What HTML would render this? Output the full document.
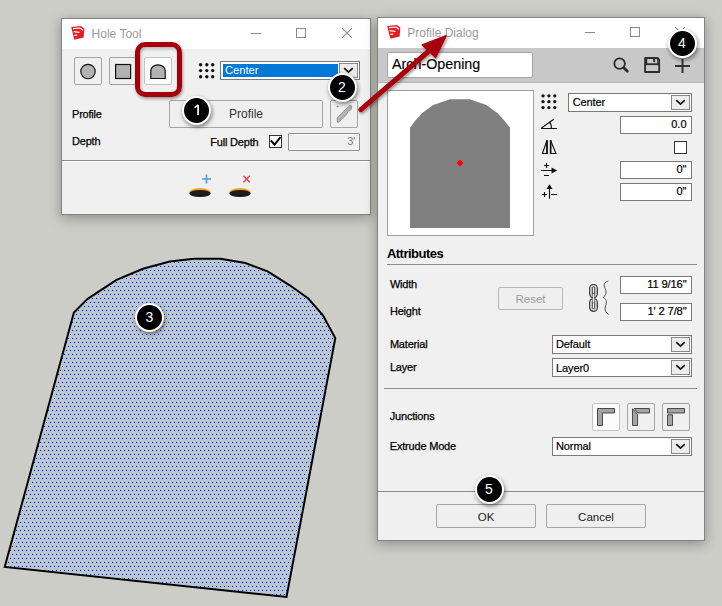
<!DOCTYPE html>
<html><head><meta charset="utf-8">
<style>
*{box-sizing:border-box;margin:0;padding:0}
html,body{width:722px;height:606px;overflow:hidden;background:#cdcdc8;font-family:"Liberation Sans",sans-serif;font-size:12px;color:#000}
.a{position:absolute}
.win{position:absolute;background:#f0f0f0;border:1px solid #828282;box-shadow:0 3px 12px rgba(0,0,0,0.32)}
.tb{position:absolute;left:0;top:0;right:0;height:30px;background:#fff}
.ttl{position:absolute;top:8px;font-size:12px;color:#999;white-space:nowrap}
.fld{position:absolute;background:#fff;border:1px solid #7a7a7a}
.txt{position:absolute;white-space:nowrap;line-height:14px}
.btn{position:absolute;border:1px solid #a5a5a5;background:#e9e9e9;border-radius:2px}
.badge{position:absolute;width:29px;height:29px;border-radius:50%;background:#000;border:2px solid #fff;box-shadow:1px 2px 4px rgba(0,0,0,0.5);color:#fff;font-size:14px;text-align:center;line-height:25px}
</style></head>
<body>

<!-- viewport shape -->
<svg class="a" style="left:0;top:0" width="722" height="606">
  <defs>
    <pattern id="dots" width="4" height="8" patternUnits="userSpaceOnUse">
      <rect width="4" height="8" fill="#b9c7d2"/>
      <rect x="0" y="2" width="1" height="1" fill="#0000ff"/>
      <rect x="2" y="6" width="1" height="1" fill="#0000ff"/>
    </pattern>
  </defs>
  <path d="M4.7,567 L73.9,312.5 L87.7,298.8 L116.5,279.9 L143,268.8 L169.7,261.5 L194,258.8 L220.5,258.8 L245.4,263 L267.6,271.3 L289.8,285.3 L308.3,298.5 L322.8,315 L335.3,338.1 L286.5,597 Z" fill="url(#dots)" stroke="#000" stroke-width="2" stroke-linejoin="miter"/>
</svg>
<div class="badge" style="left:135px;top:302.5px">3</div>

<!-- Hole Tool window -->
<div class="win" style="left:61px;top:18px;width:310px;height:197px">
  <div class="tb"></div>
  <svg class="a" style="left:9px;top:6px" width="15" height="15" viewBox="0 0 15 15"><path d="M0.2,2 L9.9,1.1 L13.4,3.8 L12.6,12.4 L3.3,14.7 Z" fill="#e31e24"/><path d="M2,3.6 L9,3 L12,5.2" stroke="#fff" stroke-width="1.2" fill="none"/><path d="M2.6,6.6 L8.4,7.3" stroke="#fff" stroke-width="1.2"/><path d="M3.4,10.4 L6.2,10.1" stroke="#fff" stroke-width="1.2"/></svg>
  <div class="txt ttl" style="left:29.6px;top:9px;font-size:12px;line-height:12px;color:#9a9a9a">Hole Tool</div>
  <div class="a" style="left:189px;top:14px;width:10px;height:1px;background:#8a8a8a"></div>
  <div class="a" style="left:234px;top:9px;width:10px;height:10px;border:1px solid #8a8a8a"></div>
  <svg class="a" style="left:280px;top:9px" width="10" height="10"><path d="M0,0 L10,10 M10,0 L0,10" stroke="#8a8a8a" stroke-width="1.1"/></svg>

  <!-- shape buttons -->
  <div class="btn" style="left:12px;top:38px;width:28px;height:28px;background:#f0f0f0;border-color:#a5a5a5"></div>
  <div class="btn" style="left:47px;top:38px;width:28px;height:28px;background:#f0f0f0;border-color:#a5a5a5"></div>
  <div class="btn" style="left:82px;top:38px;width:28px;height:28px;background:#fbfbfb;border-color:#c4c4c4"></div>
  <svg class="a" style="left:0;top:0" width="310" height="100">
    <circle cx="26" cy="52.5" r="7.2" fill="#b2b2b2" stroke="#111" stroke-width="1.15"/>
    <rect x="53.6" y="45.5" width="15" height="14" fill="#b2b2b2" stroke="#111" stroke-width="1.2"/>
    <path d="M88.8,59.5 L88.8,51.8 A7.2,6 0 0 1 103.2,51.8 L103.2,59.5 Z" fill="#b2b2b2" stroke="#111" stroke-width="1.2"/>
    <g fill="#111">
      <circle cx="138.6" cy="45.8" r="1.7"/><circle cx="144.8" cy="45.8" r="1.7"/><circle cx="150.7" cy="45.8" r="1.7"/>
      <circle cx="138.6" cy="51.6" r="1.7"/><circle cx="144.8" cy="51.6" r="1.7"/><circle cx="150.7" cy="51.6" r="1.7"/>
      <circle cx="138.6" cy="57.8" r="1.7"/><circle cx="144.8" cy="57.8" r="1.7"/><circle cx="150.7" cy="57.8" r="1.7"/>
    </g>
  </svg>
  <!-- dropdown -->
  <div class="fld" style="left:158px;top:42px;width:140px;height:19px;border-color:#7a7a7a"></div>
  <div class="a" style="left:161px;top:45px;width:115px;height:13px;background:#0078d7"></div>
  <div class="txt" style="left:162.9px;top:45.6px;font-size:11.2px;line-height:11px;color:#fff">Center</div>
  <div class="a" style="left:277px;top:44px;width:19px;height:15px;border:1px solid #8a8a8a;background:#ededed"></div>
  <svg class="a" style="left:281px;top:48px" width="11" height="7"><path d="M1.2,1.2 L5.5,5.2 L9.8,1.2" stroke="#111" stroke-width="1.7" fill="none"/></svg>

  <!-- Profile row -->
  <div class="txt" style="left:10px;top:89.6px;font-size:11px;line-height:11px;letter-spacing:-0.2px;-webkit-text-stroke:0.25px #000">Profile</div>
  <div class="btn" style="left:107px;top:81px;width:154px;height:28px;background:#efefef;border-color:#a5a5a5"></div>
  <div class="txt" style="left:107px;top:89.1px;width:154px;text-align:center;font-size:12px;line-height:12px;color:#333">Profile</div>
  <div class="btn" style="left:268px;top:81px;width:28px;height:28px;background:#efefef;border-color:#a5a5a5"></div>
  <svg class="a" style="left:268px;top:81px" width="28" height="28"><path d="M7.2,17.8 L19.4,5.4 L21.8,6 L21.2,9.4 L17.8,11.7 L16.7,14.4 L12.3,19.1 L8.3,22.5 L7.2,22 Z" fill="#b2b2b2" stroke="#8a8a8a" stroke-width="0.8" stroke-linejoin="round"/><rect x="6.9" y="5.8" width="1.5" height="1.3" fill="#f33"/></svg>

  <!-- Depth row -->
  <div class="txt" style="left:10px;top:117px;font-size:11px;line-height:11px;letter-spacing:-0.2px;-webkit-text-stroke:0.25px #000">Depth</div>
  <div class="txt" style="left:148.3px;top:117.5px;font-size:11px;line-height:11px;letter-spacing:-0.2px;-webkit-text-stroke:0.25px #000">Full Depth</div>
  <div class="a" style="left:207px;top:116px;width:13px;height:13px;border:1px solid #333;background:#fff"></div>
  <svg class="a" style="left:207px;top:116px" width="13" height="13"><path d="M1.8,5.4 L5.6,9.6 L11.6,2" stroke="#000" stroke-width="2" fill="none"/></svg>
  <div class="a" style="left:226px;top:114px;width:72px;height:18px;border:1px solid #8f8f8f;border-radius:1px;background:#f0f0f0;box-shadow:inset 0 0 0 1px #fafafa"></div>
  <div class="txt" style="left:226px;top:117.3px;width:67.4px;text-align:right;font-size:11px;line-height:11px;color:#7a7a7a">3'</div>

  <!-- separator -->
  <div class="a" style="left:0;top:141px;width:308px;height:1px;background:#8c8c8c"></div>
  <div class="a" style="left:0;top:142px;width:308px;height:1px;background:#fff"></div>

  <!-- hole icons -->
  <svg class="a" style="left:120px;top:150px" width="100" height="40">
    <ellipse cx="18" cy="23.6" rx="11" ry="4.3" fill="#f29a1a"/>
    <ellipse cx="18" cy="24.5" rx="10.6" ry="3.6" fill="#1c1c1c"/>
    <path d="M24.5,5.5 V14.5 M20,10 H29" stroke="#4a9fdc" stroke-width="1.6"/>
    <ellipse cx="58" cy="23.6" rx="11" ry="4.3" fill="#f29a1a"/>
    <ellipse cx="58" cy="24.5" rx="10.6" ry="3.6" fill="#1c1c1c"/>
    <path d="M61.5,6.8 L67.8,13.3 M67.8,6.8 L61.5,13.3" stroke="#e04848" stroke-width="1.6"/>
  </svg>
</div>

<!-- Profile Dialog window -->
<div class="win" style="left:377px;top:17px;width:328px;height:524px">
  <div class="tb"></div>
  <svg class="a" style="left:9px;top:6px" width="15" height="15" viewBox="0 0 15 15"><path d="M0.2,2 L9.9,1.1 L13.4,3.8 L12.6,12.4 L3.3,14.7 Z" fill="#e31e24"/><path d="M2,3.6 L9,3 L12,5.2" stroke="#fff" stroke-width="1.2" fill="none"/><path d="M2.6,6.6 L8.4,7.3" stroke="#fff" stroke-width="1.2"/><path d="M3.4,10.4 L6.2,10.1" stroke="#fff" stroke-width="1.2"/></svg>
  <div class="txt" style="left:29.3px;top:9px;font-size:12px;line-height:12px;color:#9a9a9a">Profile Dialog</div>
  <div class="a" style="left:206.5px;top:14px;width:10px;height:1px;background:#8a8a8a"></div>
  <div class="a" style="left:252px;top:9px;width:10px;height:10px;border:1px solid #8a8a8a"></div>
  <svg class="a" style="left:297px;top:9px" width="10" height="10"><path d="M0,0 L10,10 M10,0 L0,10" stroke="#8a8a8a" stroke-width="1.1"/></svg>

  <!-- toolbar -->
  <div class="a" style="left:0;top:30px;width:326px;height:34px;background:#c8c8c8"></div>
  <div class="a" style="left:0;top:64px;width:326px;height:1px;background:#b4b4b4"></div>
  <div class="a" style="left:9px;top:34px;width:146px;height:26px;background:#fff;border:1px solid #a3a3a3;border-radius:2px"></div>
  <div class="txt" style="left:14px;top:39.3px;font-size:14.3px;line-height:14.3px;color:#000;-webkit-text-stroke:0.15px #000">Arch-Opening</div>
  <svg class="a" style="left:230px;top:34px" width="96" height="26">
    <circle cx="11.6" cy="11.6" r="5.3" fill="none" stroke="#2b2b2b" stroke-width="1.8"/>
    <path d="M15.8,15.8 L19.3,19.3" stroke="#2b2b2b" stroke-width="2.7" stroke-linecap="round"/>
    <path d="M37.1,6 H49.5 L51.2,7.7 V20 H37.1 Z" fill="none" stroke="#2b2b2b" stroke-width="1.8" stroke-linejoin="round"/>
    <path d="M37.1,12.2 H51.2" stroke="#2b2b2b" stroke-width="1.8"/>
    <path d="M38.6,6 V12 M49.8,6 V12" stroke="#2b2b2b" stroke-width="1.2"/>
    <rect x="45.2" y="6.5" width="1.9" height="3.6" fill="#2b2b2b"/>
    <path d="M74.5,7 V21 M67,14 H82" stroke="#333" stroke-width="2"/>
  </svg>

  <!-- preview -->
  <div class="a" style="left:9px;top:72px;width:147px;height:146px;background:#fff;border:1px solid #a0a0a0"></div>
  <svg class="a" style="left:0;top:0" width="326" height="240">
    <path d="M32,210 L32,109.7 L37,103.1 L43.6,95.6 L55.2,87 L71.9,81.2 L91.8,81.2 L108.4,87 L120,95.6 L126.7,103.1 L132,109.7 L132,210 Z" fill="#808080"/>
    <path d="M81,142 H83 V143 H84 V144 H85 V146 H84 V147 H83 V148 H81 V147 H80 V146 H79 V144 H80 V143 H81 Z" fill="#ff0000"/>
    <g fill="#111">
      <circle cx="165" cy="77.8" r="1.65"/><circle cx="170.9" cy="77.8" r="1.65"/><circle cx="176.8" cy="77.8" r="1.65"/>
      <circle cx="165" cy="83.7" r="1.65"/><circle cx="170.9" cy="83.7" r="1.65"/><circle cx="176.8" cy="83.7" r="1.65"/>
      <circle cx="165" cy="89.6" r="1.65"/><circle cx="170.9" cy="89.6" r="1.65"/><circle cx="176.8" cy="89.6" r="1.65"/>
    </g>
    <!-- angle icon -->
    <path d="M163,110.5 H179 M163.4,110 L175.8,101.2" stroke="#111" stroke-width="1.2" fill="none"/>
    <path d="M171.6,104.3 Q173.6,106.5 173.5,110" stroke="#111" stroke-width="1.3" fill="none"/>
    <!-- mirror icon -->
    <path d="M164.4,135.5 L169,122.5 V135.5 Z M172.6,122.5 L178,135.5 H172.6 Z" stroke="#111" stroke-width="1.1" fill="none" stroke-linejoin="miter"/>
    <path d="M169,122 V136 M172.6,122 V136" stroke="#111" stroke-width="1.6"/>
    <!-- offset x icon -->
    <path d="M163,152.5 H174 M166,147.5 H171 M168.5,145 V150 M166,157.5 H171" stroke="#111" stroke-width="1.1" fill="none"/>
    <path d="M173.5,149.5 L179.2,152.5 L173.5,155.5 Z" fill="#111"/>
    <!-- offset y icon -->
    <path d="M171.5,170 V180.8 M164,176.5 H169 M166.5,174 V179 M173,176.5 H179" stroke="#111" stroke-width="1.1" fill="none"/>
    <path d="M168.5,171 L171.5,166.3 L174.5,171 Z" fill="#111"/>
  </svg>

  <!-- Center dropdown -->
  <div class="fld" style="left:190px;top:75px;width:124px;height:19px;border-color:#7a7a7a"></div>
  <div class="txt" style="left:194.7px;top:78.7px;font-size:11px;line-height:11px;letter-spacing:-0.1px;-webkit-text-stroke:0.2px #000">Center</div>
  <div class="a" style="left:293px;top:77px;width:19px;height:15px;border:1px solid #8a8a8a;background:#ededed"></div>
  <svg class="a" style="left:297px;top:81px" width="11" height="7"><path d="M1.2,1.2 L5.5,5.2 L9.8,1.2" stroke="#111" stroke-width="1.7" fill="none"/></svg>

  <div class="fld" style="left:242px;top:98px;width:72px;height:18px;border-color:#7a7a7a"></div>
  <div class="txt" style="left:242px;top:100.8px;width:66.5px;text-align:right;font-size:11px;line-height:11px;-webkit-text-stroke:0.2px #000">0.0</div>
  <div class="a" style="left:296px;top:123px;width:13px;height:13px;border:1px solid #333;background:#fff"></div>
  <div class="fld" style="left:242px;top:143px;width:72px;height:18px;border-color:#7a7a7a"></div>
  <div class="txt" style="left:242px;top:146.1px;width:66.5px;text-align:right;font-size:11px;line-height:11px;-webkit-text-stroke:0.2px #000">0"</div>
  <div class="fld" style="left:242px;top:165px;width:72px;height:18px;border-color:#7a7a7a"></div>
  <div class="txt" style="left:242px;top:167.8px;width:66.5px;text-align:right;font-size:11px;line-height:11px;-webkit-text-stroke:0.2px #000">0"</div>

  <!-- Attributes -->
  <div class="txt" style="left:8.9px;top:229px;font-size:13px;line-height:13px;font-weight:bold;letter-spacing:-0.5px">Attributes</div>
  <div class="a" style="left:9px;top:246px;width:310px;height:1px;background:#8c8c8c"></div>
  <div class="txt" style="left:11.9px;top:260.9px;font-size:11px;line-height:11px;letter-spacing:-0.2px;-webkit-text-stroke:0.25px #000">Width</div>
  <div class="txt" style="left:11.9px;top:288.3px;font-size:11px;line-height:11px;letter-spacing:-0.2px;-webkit-text-stroke:0.25px #000">Height</div>
  <div class="btn" style="left:120px;top:269px;width:65px;height:23px;background:#efefef;border-color:#b8b8b8"></div>
  <div class="txt" style="left:120px;top:276px;width:65px;text-align:center;font-size:11.5px;line-height:11.5px;color:#9a9a9a">Reset</div>
  <svg class="a" style="left:205px;top:260px" width="30" height="40">
    <rect x="6.6" y="6.5" width="7.8" height="13.2" rx="3.9" fill="#c9c9c9" stroke="#3c3c3c" stroke-width="1.1"/>
    <rect x="6.6" y="20.6" width="7.8" height="12.8" rx="3.9" fill="#c9c9c9" stroke="#3c3c3c" stroke-width="1.1"/>
    <rect x="9.4" y="9" width="2.2" height="8.6" rx="1.1" fill="#fff" stroke="#3c3c3c" stroke-width="0.9"/>
    <rect x="9.4" y="23.8" width="2.2" height="6.8" rx="1.1" fill="#fff" stroke="#3c3c3c" stroke-width="0.9"/>
    <rect x="9.6" y="15.4" width="1.8" height="9.5" fill="#fff" stroke="#555" stroke-width="0.6"/>
    <path d="M25.3,3 C22,4 20.5,6 21.5,9 C23,12.5 24.5,15 20.4,19.6 C24.5,22 23.5,25 22.2,29 C21.5,32 23,35 25.7,36.5" fill="none" stroke="#505050" stroke-width="1"/>
  </svg>
  <div class="fld" style="left:242px;top:258px;width:72px;height:18px;border-color:#7a7a7a"></div>
  <div class="txt" style="left:242px;top:260.8px;width:66.5px;text-align:right;font-size:11.2px;line-height:11.2px;letter-spacing:-0.15px;-webkit-text-stroke:0.2px #000">11 9/16"</div>
  <div class="fld" style="left:242px;top:285px;width:72px;height:18px;border-color:#7a7a7a"></div>
  <div class="txt" style="left:242px;top:287.9px;width:66.5px;text-align:right;font-size:11.2px;line-height:11.2px;letter-spacing:-0.15px;-webkit-text-stroke:0.2px #000">1' 2 7/8"</div>

  <div class="txt" style="left:11.9px;top:320.8px;font-size:11px;line-height:11px;letter-spacing:-0.2px;-webkit-text-stroke:0.25px #000">Material</div>
  <div class="txt" style="left:11.9px;top:343.8px;font-size:11px;line-height:11px;letter-spacing:-0.2px;-webkit-text-stroke:0.25px #000">Layer</div>
  <div class="fld" style="left:174px;top:317px;width:140px;height:19px;border-color:#7a7a7a"></div>
  <div class="txt" style="left:178px;top:321.2px;font-size:11px;line-height:11px;letter-spacing:-0.1px;-webkit-text-stroke:0.2px #000">Default</div>
  <div class="a" style="left:293px;top:319px;width:19px;height:15px;border:1px solid #8a8a8a;background:#ededed"></div>
  <svg class="a" style="left:297px;top:323px" width="11" height="7"><path d="M1.2,1.2 L5.5,5.2 L9.8,1.2" stroke="#111" stroke-width="1.7" fill="none"/></svg>
  <div class="fld" style="left:174px;top:340px;width:140px;height:19px;border-color:#7a7a7a"></div>
  <div class="txt" style="left:178px;top:344.5px;font-size:11px;line-height:11px;letter-spacing:-0.1px;-webkit-text-stroke:0.2px #000">Layer0</div>
  <div class="a" style="left:293px;top:342px;width:19px;height:15px;border:1px solid #8a8a8a;background:#ededed"></div>
  <svg class="a" style="left:297px;top:346px" width="11" height="7"><path d="M1.2,1.2 L5.5,5.2 L9.8,1.2" stroke="#111" stroke-width="1.7" fill="none"/></svg>

  <div class="a" style="left:6px;top:370px;width:313px;height:1px;background:#8c8c8c"></div>

  <!-- Junctions -->
  <div class="txt" style="left:11.8px;top:392.8px;font-size:11px;line-height:11px;letter-spacing:-0.2px;-webkit-text-stroke:0.25px #000">Junctions</div>
  <div class="btn" style="left:214px;top:385px;width:28px;height:28px;background:#fbfbfb;border-color:#c4c4c4"></div>
  <div class="btn" style="left:249px;top:385px;width:28px;height:28px;background:#f0f0f0;border-color:#a5a5a5"></div>
  <div class="btn" style="left:284px;top:385px;width:28px;height:28px;background:#f0f0f0;border-color:#a5a5a5"></div>
  <svg class="a" style="left:214px;top:385px" width="100" height="28">
    <g fill="#a3a3a3" stroke="#3a3a3a" stroke-width="0.9" stroke-linejoin="round">
    <path d="M5.5,22.5 V5.5 H22.5 V10 H10.5 V22.5 Z"/>
    <path d="M40.5,5.8 L45.6,11.3 V22.5 H40.5 Z"/>
    <path d="M42.2,5.5 H57.5 V10 H46 Z"/>
    <path d="M75.5,5.5 H92.5 V10 H75.5 Z"/>
    <path d="M75.5,11.8 H80.5 V22.5 H75.5 Z"/>
    </g>
  </svg>
  <div class="txt" style="left:11.8px;top:422.6px;font-size:11px;line-height:11px;letter-spacing:-0.2px;-webkit-text-stroke:0.25px #000">Extrude Mode</div>
  <div class="fld" style="left:174px;top:419px;width:140px;height:19px;border-color:#7a7a7a"></div>
  <div class="txt" style="left:178px;top:423.2px;font-size:11px;line-height:11px;letter-spacing:-0.1px;-webkit-text-stroke:0.2px #000">Normal</div>
  <div class="a" style="left:293px;top:421px;width:19px;height:15px;border:1px solid #8a8a8a;background:#ededed"></div>
  <svg class="a" style="left:297px;top:425px" width="11" height="7"><path d="M1.2,1.2 L5.5,5.2 L9.8,1.2" stroke="#111" stroke-width="1.7" fill="none"/></svg>

  <!-- bottom -->
  <div class="a" style="left:0;top:473px;width:326px;height:1px;background:#8a8a8a"></div>
  <div class="btn" style="left:58px;top:486px;width:100px;height:24px;background:#efefef;border-color:#a5a5a5"></div>
  <div class="txt" style="left:58px;top:493.5px;width:100px;text-align:center;font-size:11.5px;line-height:11.5px;color:#1a1a1a">OK</div>
  <div class="btn" style="left:168px;top:486px;width:100px;height:24px;background:#efefef;border-color:#a5a5a5"></div>
  <div class="txt" style="left:168px;top:493.5px;width:100px;text-align:center;font-size:11.5px;line-height:11.5px;color:#1a1a1a">Cancel</div>
</div>

<!-- annotations -->
<div class="a" style="left:135px;top:42px;width:47px;height:55px;border:5px solid #a8000b;border-radius:10px;box-shadow:1px 2px 3px rgba(0,0,0,0.35), inset 1px 2px 3px rgba(0,0,0,0.3)"></div>
<svg class="a" style="left:0;top:0" width="722" height="606">
  <defs><filter id="sh" x="-20%" y="-20%" width="140%" height="140%"><feDropShadow dx="1" dy="2" stdDeviation="1.5" flood-opacity="0.4"/></filter></defs>
  <g filter="url(#sh)">
    <path d="M360.8,109.7 L429,51" stroke="#a8000b" stroke-width="5" stroke-linecap="round"/>
    <path d="M446,35.8 L422.3,44.9 L435.6,57.4 Z" fill="#a8000b" stroke="#a8000b" stroke-width="1.5" stroke-linejoin="round"/>
  </g>
</svg>
<div class="badge" style="left:181.5px;top:96px"><svg style="position:absolute;left:0;top:0" width="25" height="25"><path d="M14.1,6.9 V16.9" stroke="#fff" stroke-width="1.7"/><path d="M14.3,6.9 L10.6,9.6" stroke="#fff" stroke-width="1.3"/></svg></div>
<div class="badge" style="left:327.5px;top:73px">2</div>
<div class="badge" style="left:667.5px;top:29px">4</div>
<div class="badge" style="left:474.5px;top:475px">5</div>

</body></html>
